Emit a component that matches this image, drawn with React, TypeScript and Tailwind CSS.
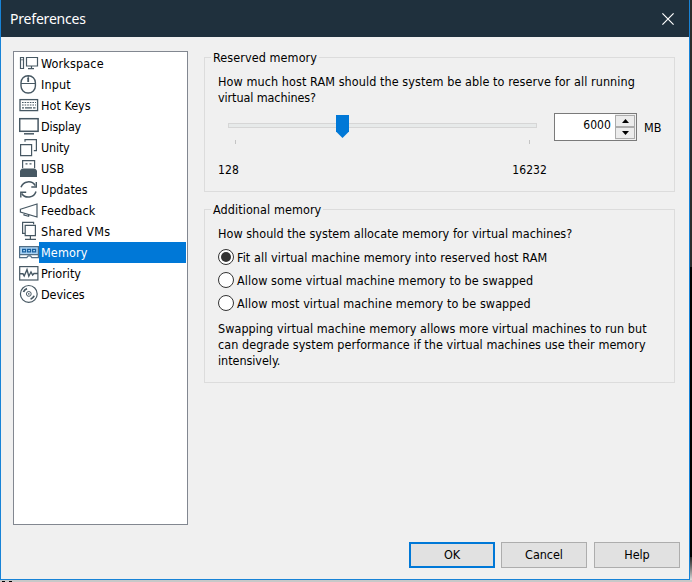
import type { ReactNode } from "react";

const C = "#475863";

function Icon({ children }: { children: ReactNode }) {
  return (
    <svg width="20" height="21" viewBox="0 0 20 21" fill="none" stroke={C} strokeWidth="1.2" className="shrink-0">
      {children}
    </svg>
  );
}

const items: { label: string; tracking: string; icon: ReactNode }[] = [
  {
    label: "Workspace", tracking: "tracking-[0.15px]",
    icon: <><path d="M1.5 4.5h3v11h-3zM7.5 4.5h11v8.5h-11zM9 15.7h6M12.5 13v2.4" /><path d="M3 6v1.5" strokeWidth="1" /></>,
  },
  {
    label: "Input", tracking: "tracking-[0.15px]",
    icon: <><rect x="2" y="1.8" width="14.4" height="17.2" rx="7" strokeWidth="1.4" /><path d="M2 9.5h14.4M9.2 2v3" /><path d="M9.2 4v4" strokeWidth="1.8" /></>,
  },
  {
    label: "Hot Keys", tracking: "tracking-[0.02px]",
    icon: <><rect x="1" y="4.6" width="17.6" height="11" strokeWidth="1.3" /><path d="M3 7.5h14M3 10h14" strokeDasharray="1.6 1" /><path d="M3 12.9h2M6 12.9h7M14 12.9h2.5" /></>,
  },
  {
    label: "Display", tracking: "tracking-[-0.2px]",
    icon: <><rect x="0.7" y="2.7" width="18.4" height="12.6" strokeWidth="1.5" /><path d="M5 17.8h10" strokeWidth="1.5" /></>,
  },
  {
    label: "Unity", tracking: "tracking-[-0.2px]",
    icon: <path d="M1.6 7.6h11v11h-11zM6 4.8V2.6h11.4v11h-2.6" />,
  },
  {
    label: "USB", tracking: "tracking-[0.1px]",
    icon: <><path d="M3.6 10V2.6h12V10" /><path d="M6.5 5.8h2M10.5 5.8h2" /><path d="M3 10.5h13l2 2V19H1v-6.5z" fill={C} stroke="none" /></>,
  },
  {
    label: "Updates", tracking: "tracking-[0px]",
    icon: <><path d="M2 8.2A8 8 0 0 1 16.3 6.6M17 12.5a8 8 0 0 1-14.3 2" strokeWidth="1.5" /><path d="M17.3 3v5h-5M1.8 18.4v-5.2h5.4" strokeWidth="1.4" /></>,
  },
  {
    label: "Feedback", tracking: "tracking-[0.1px]",
    icon: <path d="M1.4 9.3 18 4v13L1.4 12zM5 13.2v1.9l4.6 1.2v-1.8" />,
  },
  {
    label: "Shared VMs", tracking: "tracking-[0.3px]",
    icon: <path d="M5.6 12.4H3.6v-11h11v1.8M6.2 4.4h10.2v10.2H6.2zM6 18.4h11M11.4 14.6v3.6" />,
  },
  {
    label: "Memory", tracking: "tracking-[0.15px]",
    icon: <><path d="M0 5h20v8H0z" fill="#a9d2f3" stroke="none" /><path d="M0 4.6h20M0 12.7h20" stroke="#526e85" /><path d="M.6 5v10.6h7.2l1.3-1.8h2.4l1.3 1.8H19.4V5" stroke="#526e85" /><path d="M3.6 7.4h3v2.4h-3zM8.6 7.4h3v2.4h-3zM13.6 7.4h3v2.4h-3z" stroke="#185f9e" /></>,
  },
  {
    label: "Priority", tracking: "tracking-[0px]",
    icon: <><rect x="0.7" y="3.6" width="18.2" height="13.4" /><path d="M1 10.8h3l1.2 2.2L8 6.6l1.8 6.6L12 9l1.6 3 1.4-1.5h4" strokeWidth="1.4" /></>,
  },
  {
    label: "Devices", tracking: "tracking-[-0.1px]",
    icon: <><circle cx="9.8" cy="9.9" r="8.4" /><circle cx="9.8" cy="9.9" r="2.4" strokeWidth="1" /><circle cx="9.8" cy="9.9" r=".8" fill={C} stroke="none" /><path d="M4.5 8A5.6 5.6 0 0 1 8 4.6M15.1 11.8a5.6 5.6 0 0 1-3.5 3.4" strokeWidth="1.8" /></>,
  },
];

function Group({ title, className, children }: { title: string; className: string; children: ReactNode }) {
  return (
    <section className={`w-[471px] border border-[#dcdcdc] ${className}`}>
      <h2 className="-mt-2 ml-1.5 w-fit bg-[#f0f0f0] px-0.5 leading-4">{title}</h2>
      <div className="pl-[13px]">{children}</div>
    </section>
  );
}

function Radio({ label, checked = false }: { label: string; checked?: boolean }) {
  return (
    <div role="radio" aria-checked={checked} className="flex h-[23px] items-center gap-[3px]">
      <span className="-mt-px flex size-4 items-center justify-center rounded-full border border-[#333] bg-white">
        {checked && <span className="size-2.5 rounded-full bg-[#333]" />}
      </span>
      <span>{label}</span>
    </div>
  );
}

export default function App() {
  return (
    <div className="flex h-[582px] w-[692px] flex-col overflow-hidden bg-[#c8c8c8] font-['DejaVu_Sans_Condensed','DejaVu_Sans',sans-serif] text-[12.5px] leading-4 tracking-[0.08px] text-black">
      <div className="flex h-[580px]">
        <div className="flex w-[690px] flex-col border-r border-b border-l border-[#1883d7] bg-[#f0f0f0]">
          <header className="flex h-[37px] shrink-0 items-center justify-between bg-[#1f303d] pr-[15px] pl-[9px] font-['Noto_Sans',sans-serif] text-[14px] tracking-[-0.2px] text-white">
            <span>Preferences</span>
            <svg width="12" height="12" viewBox="0 0 12 12" stroke="white" strokeWidth="1.2"><path d="m.4.4 11.2 11.2m0-11.2L.4 11.6" /></svg>
          </header>
          <div className="flex h-[488px] shrink-0 gap-4 pt-3.5 pl-3">
            <ul className="h-[474px] w-[175px] border border-[#828790] bg-white pt-px pr-px pl-[5px]">
              {items.map((it) => (
                <li key={it.label} className="flex h-[21px] items-center">
                  <Icon>{it.icon}</Icon>
                  <span className={`flex h-[21px] flex-1 items-center pl-0.5 ${it.tracking} ${it.label === "Memory" ? "bg-[#0078d7] text-white" : ""}`}>
                    {it.label}
                  </span>
                </li>
              ))}
            </ul>
            <main className="pt-1.5">
              <Group title="Reserved memory" className="h-[135px]">
                <p className="mt-2 whitespace-nowrap">How much host RAM should the system be able to reserve for all running<br /><span className="tracking-[-0.1px]">virtual machines?</span></p>
                <div className="mt-[7px] flex">
                  <div className="w-[336px]">
                    <div className="ml-[10px] grid h-[27px] w-[309px] items-start pt-[2px]">
                      <div className="col-start-1 row-start-1 mt-2 h-[5px] border border-[#d6d6d6] bg-[#e7eaea]" />
                      <svg className="col-start-1 row-start-1 ml-[108px]" width="13" height="23" viewBox="0 0 13 23"><path d="M0 0h13v16.5L6.5 23 0 16.5z" fill="#0078d7" /></svg>
                    </div>
                    <div className="mr-[24px] ml-[17px] flex justify-between"><i className="h-1 w-px bg-[#c4c4c4]" /><i className="h-1 w-px bg-[#c4c4c4]" /></div>
                    <div className="mt-[18px] flex w-[329px] justify-between text-[12px]"><span>128</span><span>16232</span></div>
                  </div>
                  <div className="flex h-7 w-[83px] border border-[#7a7a7a] bg-white">
                    <span className="flex-1 pt-[3px] pr-1 text-right text-[12px]">6000</span>
                    <div className="flex w-[21px] flex-col bg-[#f0f0f0] p-px pl-0">
                      {["M3.5 0 7 4H0z", "M0 0h7L3.5 4z"].map((d) => (
                        <button key={d} className="flex flex-1 items-center justify-center border border-[#acacac] bg-[#ececec]">
                          <svg width="7" height="4"><path d={d} /></svg>
                        </button>
                      ))}
                    </div>
                  </div>
                  <span className="mt-[7px] ml-[7px]">MB</span>
                </div>
              </Group>
              <Group title="Additional memory" className="mt-[17px] h-[174px]">
                <p className="mt-2 tracking-[0.03px]">How should the system allocate memory for virtual machines?</p>
                <div className="mt-1 tracking-[0.08px]" role="radiogroup">
                  <Radio checked label="Fit all virtual machine memory into reserved host RAM" />
                  <Radio label="Allow some virtual machine memory to be swapped" />
                  <Radio label="Allow most virtual machine memory to be swapped" />
                </div>
                <p className="mt-1.5 whitespace-nowrap tracking-[0.05px]">Swapping virtual machine memory allows more virtual machines to run but<br />can degrade system performance if the virtual machines use their memory<br /><span className="tracking-[-0.05px]">intensively.</span></p>
              </Group>
            </main>
          </div>
          <footer className="flex pt-[17px] pl-[408px] tracking-[-0.05px]">
            <button className="h-[26px] w-[86px] border-2 border-[#0078d7] bg-[#e1e1e1]">OK</button>
            <button className="ml-1.5 h-[26px] w-[86px] border border-[#adadad] bg-[#e1e1e1]">Cancel</button>
            <button className="ml-[7px] h-[26px] w-[86px] border border-[#adadad] bg-[#e1e1e1]">Help</button>
          </footer>
        </div>
        <div className="flex w-0.5 flex-col"><div className="h-[267px] bg-[#2b2b2b]" /><div className="h-[290px] bg-black" /><div className="flex-1 bg-gradient-to-b from-[#222] to-[#ddd]" /></div>
      </div>
      <div className="flex h-0.5 pt-px"><i className="ml-0.5 h-px w-[3px] bg-black" /><i className="ml-1 h-px w-[3px] bg-black" /></div>
    </div>
  );
}
